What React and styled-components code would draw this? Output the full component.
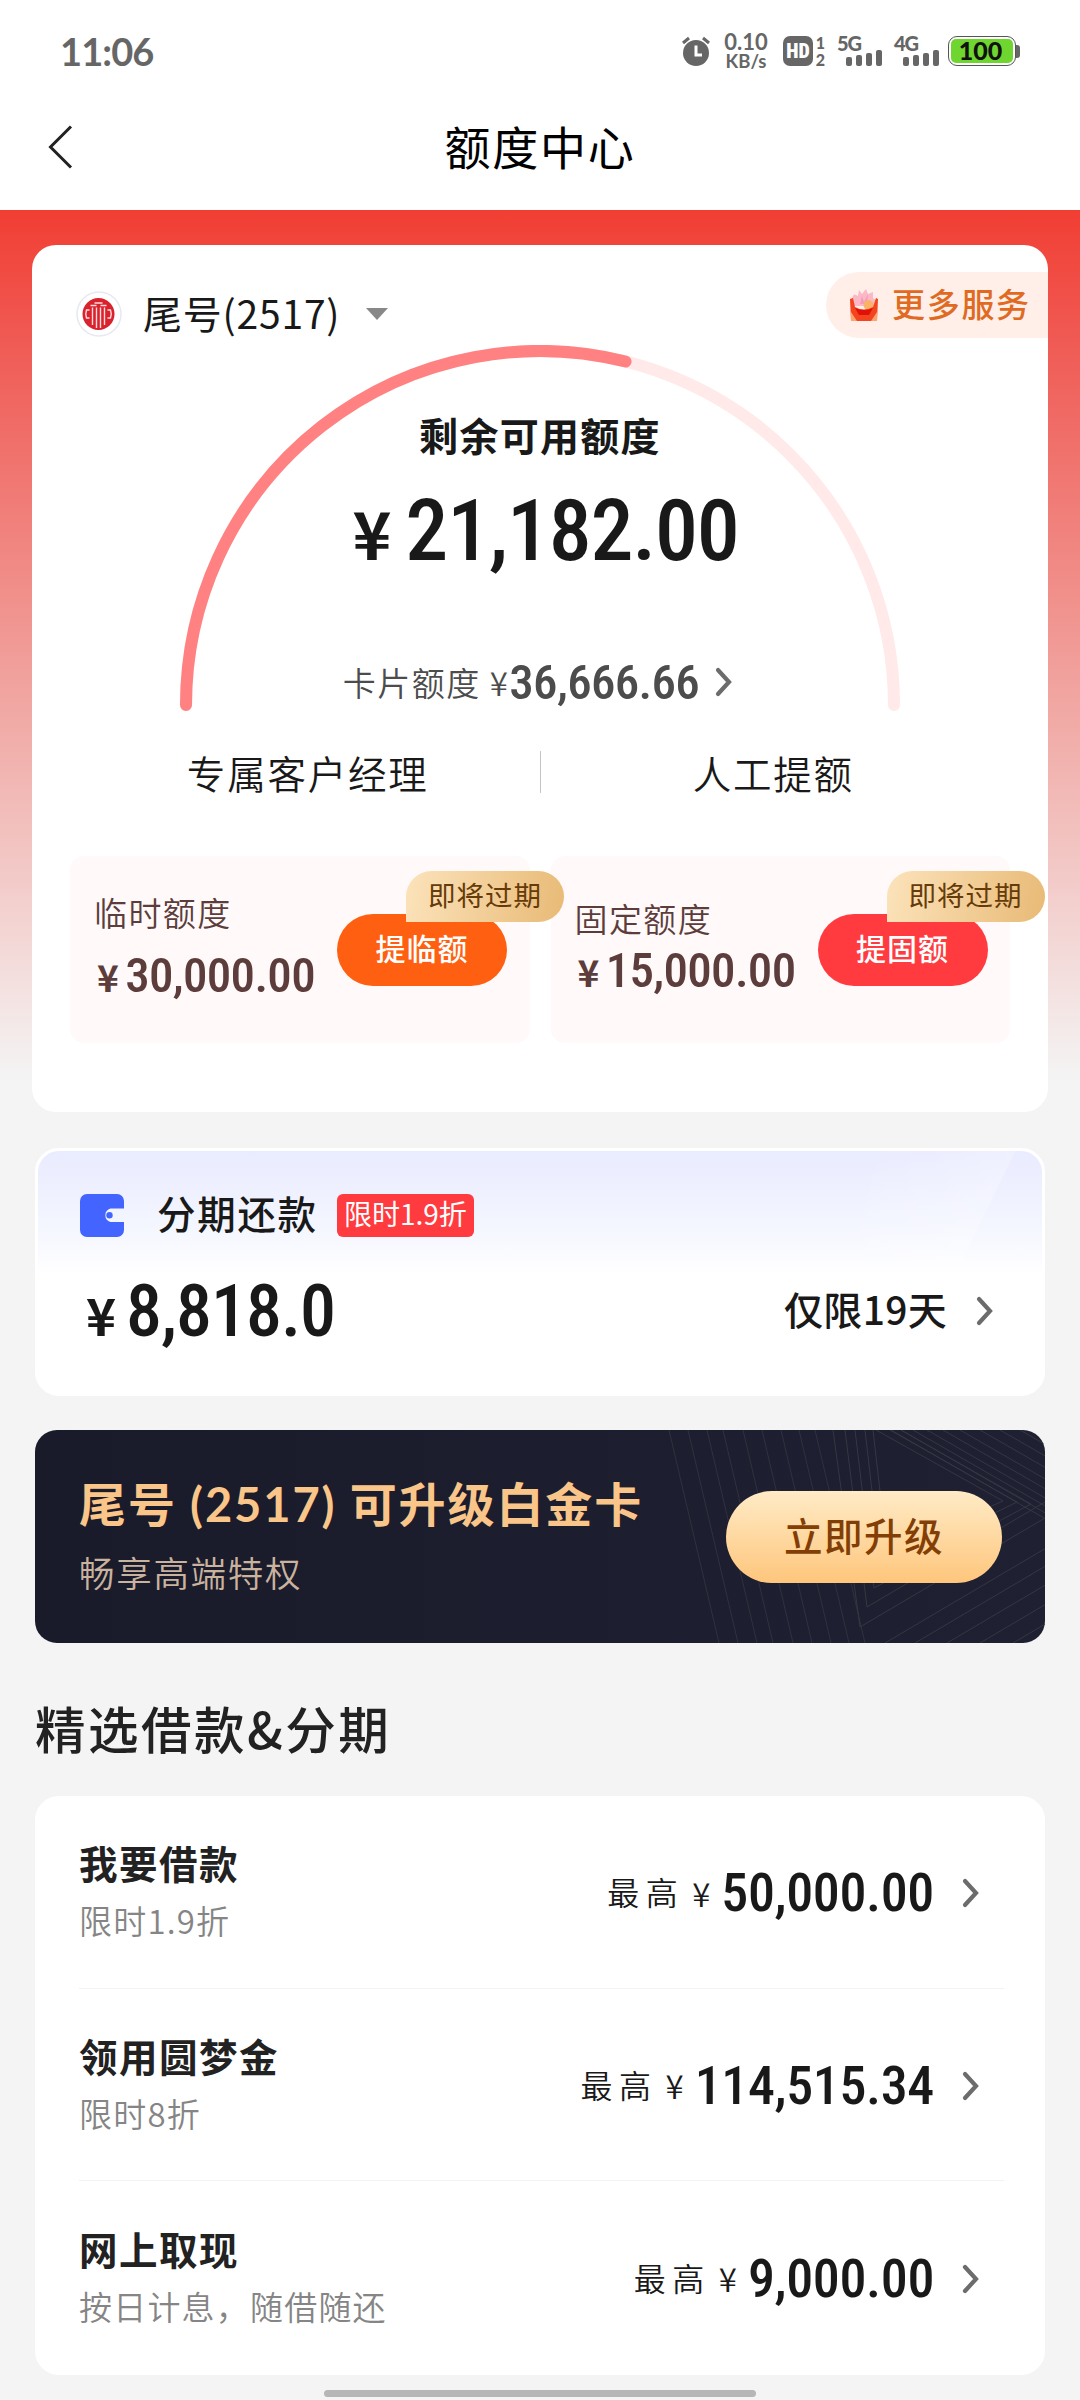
import React from 'react';
import styled, { createGlobalStyle } from 'styled-components';

const GlobalStyle = createGlobalStyle`
  * {
    box-sizing: border-box;
  }

  body {
    margin: 0;
    background-color: #f4f4f4;
    font-family: 'Noto Sans CJK SC', sans-serif;
    color: #191919;
  }
`;

const Page = styled.div`
  width: 1080px;
  min-height: 2400px;
  overflow: hidden;
`;

/* ---------- status bar ---------- */

const StatusBar = styled.div`
  display: flex;
  align-items: center;
  justify-content: space-between;
  height: 102px;
  padding: 0 60px;
  background-color: white;
  color: #666;
`;

const Clock = styled.div`
  font-family: Lato, sans-serif;
  font-size: 38px;
  font-weight: 700;
  line-height: 40px;
  letter-spacing: -0.9px;
`;

const StatusIcons = styled.div`
  display: flex;
  align-items: center;
`;

const NetSpeed = styled.div`
  display: flex;
  flex-direction: column;
  align-items: center;
  width: 46px;
  margin-left: 12px;
  margin-right: 1px;
  font-family: Lato, sans-serif;
  font-weight: 700;
  font-size: 22px;
  line-height: 20px;

  small {
    font-size: 18.5px;
    line-height: 18px;
  }
`;

const HdBadge = styled.div`
  width: 30px;
  height: 30px;
  margin-left: 13px;
  border-radius: 7px;
  background-color: #666;
  color: white;
  font-family: Roboto, sans-serif;
  font-size: 20px;
  font-weight: 900;
  font-stretch: 75%;
  line-height: 31px;
  text-align: center;
`;

const SimNumbers = styled.div`
  display: flex;
  flex-direction: column;
  align-items: center;
  width: 11px;
  margin-left: 2px;
  font-family: Lato, sans-serif;
  font-size: 16px;
  font-weight: 900;
  line-height: 17px;
`;

const Signal = styled.div`
  width: 46px;
  height: 30px;
  margin-left: 11px;
  font-family: Lato, sans-serif;
  font-size: 20px;
  font-weight: 900;
  line-height: 14px;
  letter-spacing: -1px;
`;

const Bars = styled.div`
  display: flex;
  align-items: flex-end;
  justify-content: flex-end;
  gap: 4px;
  height: 16px;
  margin-right: 1px;
`;

const Bar = styled.i`
  width: 6px;
  height: ${props => props.$height}px;
  border-radius: 2px;
  background-color: #666;
`;

const Battery = styled.div`
  width: 68px;
  height: 30px;
  margin-left: 8px;
  padding: 2px;
  border: 1.5px solid #555;
  border-radius: 9px;
  background-color: white;
`;

const BatteryLevel = styled.div`
  height: 100%;
  padding-right: 3px;
  border-radius: 5px;
  background-color: #6fd62f;
  color: #111;
  font-family: Lato, sans-serif;
  font-size: 25px;
  font-weight: 900;
  line-height: 23px;
  text-align: center;
`;

const BatteryCap = styled.div`
  width: 4px;
  height: 13px;
  border-radius: 0 3px 3px 0;
  background-color: #666;
`;

/* ---------- nav bar ---------- */

const NavBar = styled.div`
  display: grid;
  grid-template-columns: 48px 1fr 48px;
  align-items: center;
  height: 108px;
  padding: 0 48px 18px;
  background-color: white;
`;

const NavTitle = styled.h1`
  margin: -4px 0 0;
  color: black;
  font-size: 46px;
  font-weight: 400;
  line-height: 60px;
  letter-spacing: 1.8px;
  text-align: center;
`;

/* ---------- shared pieces ---------- */

const Content = styled.main`
  padding: 35px 32px 0;
  background: linear-gradient(#f13e33 0, #f05a54 130px, #f1aaa6 510px, #f4f4f4 870px);
`;

const Amount = styled.span`
  font-family: Roboto, sans-serif;
  font-size: ${props => props.$size}px;
  font-weight: 500;
  font-stretch: 75%;
  line-height: 1;
  letter-spacing: -0.014em;
  white-space: nowrap;
`;

const Yen = styled.span`
  font-size: ${props => props.$size}px;
  font-weight: ${props => props.$weight || 700};
  line-height: 1;
`;

/* ---------- limit card ---------- */

const LimitCard = styled.section`
  height: 867px;
  border-radius: 24px;
  background-color: white;
`;

const CardHeader = styled.div`
  display: flex;
  justify-content: space-between;
  align-items: flex-start;
  height: 100px;
  padding: 27px 0 0 44px;
`;

const CardPicker = styled.div`
  display: flex;
  align-items: center;
  height: 62px;
  margin-top: 11px;
  font-size: 39px;
  letter-spacing: 0.8px;
`;

const CardNumber = styled.span`
  margin: -4px 26px 0 21px;
`;

const MoreServices = styled.div`
  display: flex;
  align-items: center;
  gap: 13px;
  width: 222px;
  height: 66px;
  padding-left: 23px;
  border-radius: 33px 0 0 33px;
  background-color: #ffefe8;
  color: #e06a22;
  font-size: 33px;
  font-weight: 500;
  letter-spacing: 1.7px;
  line-height: 60px;
  white-space: nowrap;

  span {
    margin-top: -4px;
  }
`;

const Gauge = styled.div`
  display: grid;
  width: 720px;
  height: 367px;
  margin: 0 auto;

  > * {
    grid-area: 1 / 1;
  }
`;

const GaugeInfo = styled.div`
  display: flex;
  flex-direction: column;
  align-items: center;
  padding-top: 67px;
`;

const GaugeLabel = styled.div`
  font-size: 39px;
  font-weight: 700;
  line-height: 44px;
  letter-spacing: 1.3px;
`;

const GaugeAmount = styled.div`
  display: flex;
  align-items: baseline;
  gap: 14px;
  height: 90px;
  margin-top: 32px;
  padding-left: 11px;
  line-height: 90px;
`;

const CardLimit = styled.div`
  display: flex;
  align-items: center;
  height: 50px;
  margin-top: 79px;
  padding-right: 5px;
  color: #4c4c4c;
  font-size: 33px;
  font-weight: 350;
  letter-spacing: 1.5px;

  ${Amount} {
    margin-right: 16px;
  }
`;

const Links = styled.div`
  display: flex;
  align-items: center;
  height: 60px;
  margin-top: 30px;
  padding: 0 38px;
`;

const LinkItem = styled.div`
  flex: 1;
  font-size: 38.5px;
  font-weight: 350;
  line-height: 56px;
  letter-spacing: 1.8px;
  text-align: center;
  text-indent: ${props => props.$indent}px;
`;

const LinkDivider = styled.div`
  width: 1px;
  height: 42px;
  background-color: #c4c4c4;
`;

const QuotaRow = styled.div`
  display: flex;
  gap: 21px;
  margin-top: 54px;
  padding: 0 38px;
`;

const QuotaBox = styled.div`
  position: relative;
  display: flex;
  flex: 1;
  align-items: center;
  height: 187px;
  padding-left: 24px;
  border-radius: 14px;
  background-color: #fff9f9;
  color: #5c3d3c;
`;

const QuotaText = styled.div`
  display: flex;
  flex-direction: column;
  gap: ${props => props.$gap}px;
  width: 221px;
  margin-bottom: 18px;
  font-size: 33px;
  line-height: 36px;
  font-weight: 350;
  letter-spacing: 1.4px;
`;

const QuotaAmount = styled.div`
  display: flex;
  justify-content: flex-end;
  align-items: baseline;
  gap: 5px;
  height: 36px;
`;

const QuotaButton = styled.div`
  width: 170px;
  height: 72px;
  margin-left: 22px;
  border-radius: 36px;
  background-color: ${props => props.$color};
  color: white;
  font-size: 30px;
  font-weight: 500;
  line-height: 67px;
  letter-spacing: 1px;
  text-align: center;
`;

const ExpireTag = styled.div`
  position: absolute;
  z-index: 1;
  top: 15px;
  left: 336px;
  width: 158px;
  height: 51px;
  border-radius: 26px 26px 26px 0;
  background: linear-gradient(100deg, #fce3bb, #e8ba76);
  color: #673b08;
  font-size: 27.5px;
  line-height: 46px;
  letter-spacing: 1px;
  text-align: center;
`;

/* ---------- instalment card ---------- */

const InstalmentCard = styled.section`
  height: 248px;
  margin: 36px 3px 0;
  padding: 43px 49px 0 42px;
  border: 3px solid white;
  border-radius: 24px;
  background:
    linear-gradient(116deg, transparent 74%, rgba(255, 255, 255, 0.25) 87%, transparent 87.2%),
    linear-gradient(#e9ebff, #f3f5ff 70px, #fff 124px);
`;

const InstalmentHead = styled.div`
  display: flex;
  align-items: center;
  height: 43px;
  font-size: 38.5px;
  font-weight: 450;
  letter-spacing: 1.7px;

  span {
    margin: -7px 19px 0 33px;
  }
`;

const DiscountBadge = styled.div`
  width: 137px;
  height: 43px;
  border-radius: 6px;
  background-color: #ff3b40;
  color: white;
  font-size: 28px;
  font-weight: 400;
  line-height: 38px;
  letter-spacing: 0;
  text-align: center;
`;

const InstalmentBody = styled.div`
  display: flex;
  align-items: center;
  justify-content: space-between;
  height: 70px;
  margin-top: 39px;
`;

const InstalmentAmount = styled.div`
  display: flex;
  align-items: baseline;
  gap: 10px;
  padding: 2px 0 0 6px;
`;

const DaysLeft = styled.div`
  display: flex;
  align-items: center;
  gap: 29px;
  font-size: 39px;
  font-weight: 450;
  line-height: 56px;
  letter-spacing: 0.3px;

  span {
    margin-top: -6px;
  }
`;

/* ---------- upgrade banner ---------- */

const Banner = styled.section`
  position: relative;
  display: flex;
  align-items: center;
  justify-content: space-between;
  height: 213px;
  margin: 34px 3px 0;
  padding: 0 43px 0 44px;
  border-radius: 22px;
  background: linear-gradient(90deg, #191a2a, #1f2031);
  overflow: hidden;
`;

const BannerPattern = styled.svg`
  position: absolute;
  inset: 0;
`;

const BannerTitle = styled.div`
  color: #fac588;
  font-family: Lato, 'Noto Sans CJK SC', sans-serif;
  font-size: 47px;
  font-weight: 700;
  line-height: 50px;
  letter-spacing: 1.9px;
`;

const BannerText = styled.div`
  margin: 23px 0 3px;
  color: #c9b29e;
  font-size: 35.5px;
  font-weight: 350;
  line-height: 40px;
  letter-spacing: 1.7px;
`;

const UpgradeButton = styled.div`
  position: relative;
  width: 276px;
  height: 92px;
  border-radius: 46px;
  background: linear-gradient(#ffebc6, #fec67c);
  color: #833e05;
  font-size: 38.5px;
  font-weight: 500;
  line-height: 86px;
  letter-spacing: 1.5px;
  text-align: center;
`;

/* ---------- loan list ---------- */

const SectionTitle = styled.h2`
  margin: 54px 3px 39px;
  color: #222;
  font-size: 50.5px;
  font-weight: 500;
  line-height: 60px;
  letter-spacing: 2.5px;
`;

const LoanList = styled.section`
  height: 579px;
  margin: 0 3px;
  padding: 0 41px 0 44px;
  border-radius: 24px;
  background-color: white;
`;

const LoanItem = styled.div`
  display: flex;
  align-items: center;
  justify-content: space-between;
  height: 192.5px;
  padding-right: 25px;
  border-bottom: 1px solid #f3f3f3;

  &:last-child {
    border-bottom: none;
  }
`;

const LoanName = styled.div`
  color: #222;
  font-size: 38.5px;
  font-weight: 700;
  line-height: 44px;
  letter-spacing: 1.5px;
`;

const LoanNote = styled.div`
  margin: 14px 0 1px;
  color: #858585;
  font-size: 33px;
  font-weight: 350;
  line-height: 44px;
  letter-spacing: 1.2px;
`;

const LoanLimit = styled.div`
  display: flex;
  align-items: center;
  padding-top: 3px;
  font-size: 32px;
  font-weight: 350;

  ${Yen} {
    margin: 0 11px 0 8px;
  }

  ${Amount} {
    margin-right: 28px;
    letter-spacing: -0.007em;
  }
`;

const LoanPrefix = styled.span`
  margin-top: -4px;
  letter-spacing: 6.5px;
`;

const HomeIndicator = styled.div`
  width: 432px;
  height: 7px;
  margin: 15px auto 3px;
  border-radius: 4px;
  background-color: #b6b6b6;
`;

/* ---------- icons ---------- */

const AlarmIcon = () => (
  <svg width="30" height="30" viewBox="0 0 30 30" fill="none">
    <circle cx="15" cy="17" r="13" fill="#666" />
    <path d="M2 7l6-5M28 7l-6-5" stroke="#666" strokeWidth="3" />
    <path d="M15 9.500v9.500h6" stroke="white" strokeWidth="3" />
  </svg>
);

const BackIcon = () => (
  <svg width="26" height="44" viewBox="0 0 26 44" fill="none">
    <path d="M23 1.500L2.500 22L23 42.500" stroke="#222" strokeWidth="3" />
  </svg>
);

const ChevronIcon = () => (
  <svg width="17" height="30" viewBox="0 0 17 30" fill="none">
    <path d="M3 3l11 12L3 27" stroke="#6c6c6c" strokeWidth="4.200" strokeLinecap="round" />
  </svg>
);

const BankLogo = () => (
  <svg width="46" height="46" viewBox="0 0 46 46" fill="none">
    <circle cx="23" cy="23" r="22" fill="white" stroke="#e6e9f0" strokeWidth="1.500" />
    <circle cx="22.500" cy="23" r="16" fill="#d8232f" />
    <g stroke="#ffdcdc" strokeWidth="1.400">
      <path d="M13.500 19h-3q-1.500 4 0 8h3M31.500 19h3q1.500 4 0 8h-3" />
      <path d="M16.500 34V16.500M28.500 34V16.500M20.500 37V16.500M24.500 37V16.500" />
      <path d="M14.500 14.500h6M24.500 14.500h6M18.500 12h8" />
    </g>
  </svg>
);

const CaretIcon = () => (
  <svg width="22" height="12" viewBox="0 0 22 12">
    <path d="M0 0h22L11 12z" fill="#888" />
  </svg>
);

const GiftIcon = () => (
  <svg width="30" height="34" viewBox="0 0 30 34">
    <path d="M3 12q1-7 4-5l2 1 1-6 3 4 4-5 2 5 5-2 0 6 3 2-1 6H5z" fill="#fbb9c8" />
    <path d="M11 16l2-8 2 6 4-8-1 10z" fill="#f59bb8" />
    <circle cx="19.500" cy="17" r="5" fill="#f9b268" />
    <path d="M1 11l3-1 2 9q9 5 18 0l3-9 2 1-1 22H2z" fill="#f4431f" />
    <path d="M6 20q9 4 18 0l-4 7H10z" fill="#e01208" />
    <path d="M2 24l6 9H2zM28 24l-6 9h6z" fill="#fba56b" />
  </svg>
);

const WalletIcon = () => (
  <svg width="44" height="43" viewBox="0 0 44 43">
    <path
      d="M7 0h30a7 7 0 0 1 7 7v7.500H30.500a7 7 0 0 0 0 13.500H44v8a7 7 0 0 1-7 7H7a7 7 0 0 1-7-7V7a7 7 0 0 1 7-7z"
      fill="#4364ff"
    />
    <circle cx="29.500" cy="21.200" r="3.200" fill="#4364ff" />
  </svg>
);

const GAUGE_RADIUS = 354;

const GaugeArc = ({ ratio }) => {
  const angle = Math.PI * (1 - ratio);
  const endX = 360 + GAUGE_RADIUS * Math.cos(angle);
  const endY = 360 - GAUGE_RADIUS * Math.sin(angle);

  return (
    <svg width="720" height="367" viewBox="0 0 720 367" fill="none" strokeWidth="12" strokeLinecap="round">
      <path d={`M6 360A${GAUGE_RADIUS} ${GAUGE_RADIUS} 0 0 1 714 360`} stroke="#ffe9e9" />
      <path d={`M6 360A${GAUGE_RADIUS} ${GAUGE_RADIUS} 0 0 1 ${endX} ${endY}`} stroke="#ff8182" />
    </svg>
  );
};

// Decorative lines of the upgrade banner
const steepLines = [634, 653, 672, 688, 708, 727, 746, 764, 780];
const topLines = [856, 866, 878, 892, 908, 925, 945, 965, 985];
const bottomLines = [850, 880, 912, 945, 978];

const Pattern = () => (
  <BannerPattern width="1010" height="213" viewBox="0 0 1010 213" fill="none" stroke="#363743">
    {steepLines.map(x => (
      <path key={x} d={`M${x} 0l50 213`} opacity="0.8" />
    ))}
    {topLines.map(x => (
      <path key={x} d={`M${x} 0l160 92`} />
    ))}
    {bottomLines.map(x => (
      <path key={x} d={`M${x} 213l190 -112`} />
    ))}
    <path d="M798 0L825 197L1010 88" />
    <path d="M810 0L832 177L1010 72" />
    <path d="M820 0L839 158L996 74L866 0" />
    <path d="M830 0L846 139L982 72L855 0" />
    <path d="M838 0L852 122L968 71L841 0" />
  </BannerPattern>
);

const signals = [
  { name: '5G', heights: [9, 11, 13, 16] },
  { name: '4G', heights: [9, 11, 13, 16] },
];

const quotas = [
  { label: '临时额度', amount: '30,000.00', action: '提临额', color: '#ff5f10', gap: 21 },
  { label: '固定额度', amount: '15,000.00', action: '提固额', color: '#ff3b40', gap: 10 },
];

const loans = [
  { name: '我要借款', note: '限时1.9折', amount: '50,000.00' },
  { name: '领用圆梦金', note: '限时8折', amount: '114,515.34' },
  { name: '网上取现', note: '按日计息，随借随还', amount: '9,000.00' },
];

const App = () => {
  return (
    <Page>
      <GlobalStyle />

      <StatusBar>
        <Clock>11:06</Clock>
        <StatusIcons>
          <AlarmIcon />
          <NetSpeed>
            0.10
            <small>KB/s</small>
          </NetSpeed>
          <HdBadge>HD</HdBadge>
          <SimNumbers>
            <span>1</span>
            <span>2</span>
          </SimNumbers>
          {signals.map(signal => (
            <Signal key={signal.name}>
              {signal.name}
              <Bars>
                {signal.heights.map(height => (
                  <Bar key={height} $height={height} />
                ))}
              </Bars>
            </Signal>
          ))}
          <Battery>
            <BatteryLevel>100</BatteryLevel>
          </Battery>
          <BatteryCap />
        </StatusIcons>
      </StatusBar>

      <NavBar>
        <BackIcon />
        <NavTitle>额度中心</NavTitle>
      </NavBar>

      <Content>
        <LimitCard>
          <CardHeader>
            <CardPicker>
              <BankLogo />
              <CardNumber>尾号(2517)</CardNumber>
              <CaretIcon />
            </CardPicker>
            <MoreServices>
              <GiftIcon />
              <span>更多服务</span>
            </MoreServices>
          </CardHeader>

          <Gauge>
            <GaugeArc ratio={21182 / 36666.66} />
            <GaugeInfo>
              <GaugeLabel>剩余可用额度</GaugeLabel>
              <GaugeAmount>
                <Yen $size={66}>¥</Yen>
                <Amount $size={86}>21,182.00</Amount>
              </GaugeAmount>
              <CardLimit>
                卡片额度&nbsp;
                <Yen $size={33} $weight={350}>¥</Yen>
                <Amount $size={49}>36,666.66</Amount>
                <ChevronIcon />
              </CardLimit>
            </GaugeInfo>
          </Gauge>

          <Links>
            <LinkItem $indent={6}>专属客户经理</LinkItem>
            <LinkDivider />
            <LinkItem $indent={-4}>人工提额</LinkItem>
          </Links>

          <QuotaRow>
            {quotas.map(quota => (
              <QuotaBox key={quota.label}>
                <QuotaText $gap={quota.gap}>
                  {quota.label}
                  <QuotaAmount>
                    <Yen $size={37}>¥</Yen>
                    <Amount $size={49}>{quota.amount}</Amount>
                  </QuotaAmount>
                </QuotaText>
                <QuotaButton $color={quota.color}>{quota.action}</QuotaButton>
                <ExpireTag>即将过期</ExpireTag>
              </QuotaBox>
            ))}
          </QuotaRow>
        </LimitCard>

        <InstalmentCard>
          <InstalmentHead>
            <WalletIcon />
            <span>分期还款</span>
            <DiscountBadge>限时1.9折</DiscountBadge>
          </InstalmentHead>
          <InstalmentBody>
            <InstalmentAmount>
              <Yen $size={51}>¥</Yen>
              <Amount $size={72}>8,818.0</Amount>
            </InstalmentAmount>
            <DaysLeft>
              <span>仅限19天</span>
              <ChevronIcon />
            </DaysLeft>
          </InstalmentBody>
        </InstalmentCard>

        <Banner>
          <Pattern />
          <div>
            <BannerTitle>尾号 (2517) 可升级白金卡</BannerTitle>
            <BannerText>畅享高端特权</BannerText>
          </div>
          <UpgradeButton>立即升级</UpgradeButton>
        </Banner>

        <SectionTitle>精选借款&amp;分期</SectionTitle>

        <LoanList>
          {loans.map(loan => (
            <LoanItem key={loan.name}>
              <div>
                <LoanName>{loan.name}</LoanName>
                <LoanNote>{loan.note}</LoanNote>
              </div>
              <LoanLimit>
                <LoanPrefix>最高</LoanPrefix>
                <Yen $size={33} $weight={350}>¥</Yen>
                <Amount $size={54}>{loan.amount}</Amount>
                <ChevronIcon />
              </LoanLimit>
            </LoanItem>
          ))}
        </LoanList>
        <HomeIndicator />
      </Content>
    </Page>
  );
};

export default App;
